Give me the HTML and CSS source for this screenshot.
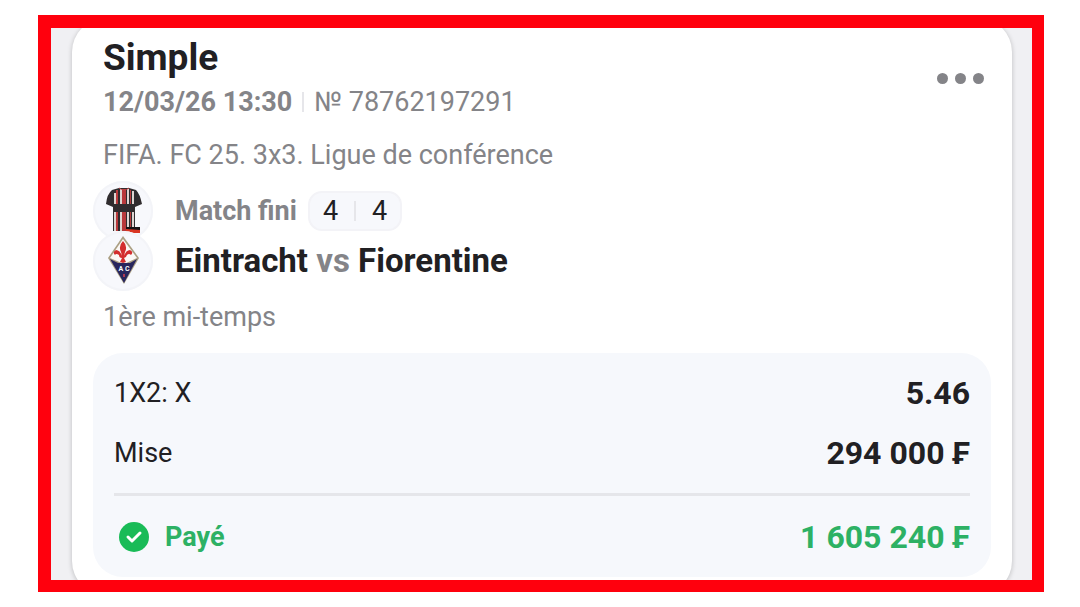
FILE: index.html
```html
<!DOCTYPE html>
<html lang="fr">
<head>
    <meta charset="UTF-8">
    <meta name="viewport" content="width=device-width, initial-scale=1.0">
    <title>Simple</title>
    <link rel="stylesheet" href="styles.css">
</head>
<body>

<main class="frame">
    <article class="card">
        <header class="card-header">
            <div class="heading">
                <h1>Simple</h1>
                <p class="meta">
                    <time datetime="2026-03-12T13:30">12/03/26 13:30</time>
                    <span class="separator"></span>
                    <span>№ 78762197291</span>
                </p>
            </div>
            <button type="button" class="menu-button" aria-label="Menu">
                <span class="dot"></span>
                <span class="dot"></span>
                <span class="dot"></span>
            </button>
        </header>

        <p class="league">FIFA. FC 25. 3x3. Ligue de conférence</p>

        <section class="match">
            <div class="logos">
                <div class="logo">
                    <svg viewBox="0 0 60 60" aria-hidden="true">
                        <path fill="#302c2e" d="M19 9 L26 7 H36 L43 9 Q47 13 49 23 L42 26 V50 H20 V26 L13 23 Q14 13 19 9 Z"/>
                        <path fill="#ddd5d1" d="M21 12h2v38h-2zM27 8h2v42h-2zM34 8h2v42h-2zM39 10h2v40h-2z"/>
                        <path fill="#b8393b" d="M23 9h2v41h-2zM29 8h4v42h-4zM37 9h1v41h-1z"/>
                        <path fill="none" stroke="#bd4143" stroke-width="1" d="M26 7q5 4 10 0"/>
                        <path fill="#302c2e" d="M21 23h20v8H21z"/>
                        <path fill="#171315" d="M33 46h14v4H33z"/>
                        <path fill="#d93623" d="M33 48l14 1v3H33z"/>
                    </svg>
                </div>
                <div class="logo">
                    <svg viewBox="0 0 60 60" aria-hidden="true">
                        <path fill="#ab9f83" d="M30 5 46 27 31 53 15 27Z"/>
                        <path fill="#fbf8f6" d="M30 8 44 27 31 33 17 27Z"/>
                        <path fill="#28265d" d="M17 28 25 32h12l7-4-13 24Z"/>
                        <path fill="#d32e2e" d="M30 10q5 5 2 11l-1 4q2-6 6-6 4 2 1 5-2-2-4 0-1 3-3 3l2 4-3 1-3-1 2-4q-3 0-3-3-3-2-4 0-3-3 1-5 4 0 6 6l-1-4q-3-6 2-11Z"/>
                        <text class="crest-text" x="31" y="40">A C</text>
                        <path fill="#ad3854" d="M30 43h2v3h-2z"/>
                    </svg>
                </div>
            </div>
            <div class="match-info">
                <div class="status">
                    <span>Match fini</span>
                    <div class="score">
                        <span>4</span>
                        <span class="separator"></span>
                        <span>4</span>
                    </div>
                </div>
                <h2>Eintracht <span class="versus">vs</span> Fiorentine</h2>
            </div>
        </section>

        <p class="period">1ère mi-temps</p>

        <dl class="details">
            <div class="row">
                <dt>1X2: X</dt>
                <dd>5.46</dd>
            </div>
            <div class="row">
                <dt>Mise</dt>
                <dd>294 000 ₣</dd>
            </div>
            <div class="row paid">
                <dt>
                    <svg class="check" viewBox="0 0 30 30" aria-hidden="true">
                        <circle cx="15" cy="15" r="15" fill="#19bb57"/>
                        <path d="M9 15l4 4 8-8" fill="none" stroke="#fff" stroke-width="3" stroke-linecap="round" stroke-linejoin="round"/>
                    </svg>
                    Payé
                </dt>
                <dd>1 605 240 ₣</dd>
            </div>
        </dl>
    </article>
</main>

</body>
</html>
```
FILE: styles.css
```css
* {
    box-sizing: border-box;
}
body {
    margin: 0;
    padding: 15px 36px 15px 38px;
    background-color: white;
    color: #212023;
    font-family: Roboto, "Liberation Sans", sans-serif;
    font-size: 27px;
    line-height: 36px;
}
h1, h2, p, dl, dd {
    margin: 0;
}
.frame {
    border: 13px solid #ff000d;
    border-right-width: 12px;
    border-bottom-width: 12px;
    padding: 0 20px 0 21px;
    background-color: #f0f0f3;
    overflow: hidden;
}
/* the card runs under the top and bottom edges of the frame */
.card {
    margin: -10px 0 -15px;
    padding: 19px 21px 18px;
    background-color: white;
    border-radius: 34px;
    box-shadow: 0 1px 5px rgba(0, 0, 0, 0.22);
}
.card-header {
    display: flex;
    justify-content: space-between;
    align-items: center;
    padding: 0 3px 0 10px;
}
h1 {
    font-size: 37px;
    line-height: 42px;
    margin-bottom: 5px;
}
.meta {
    display: flex;
    align-items: center;
    gap: 10px;
    color: #848488;
}
.meta time {
    font-weight: bold;
}
.separator {
    width: 2px;
    height: 20px;
    background-color: #e6e6ea;
}
.menu-button {
    display: flex;
    gap: 7px;
    padding: 4px;
    border: none;
    background: none;
    cursor: pointer;
}
.dot {
    width: 11px;
    height: 11px;
    border-radius: 50%;
    background-color: #848488;
}
.league {
    margin: 17px 10px 8px;
    color: #848488;
}
.match {
    display: flex;
    align-items: center;
    gap: 22px;
}
.logos {
    width: 60px;
}
.logo {
    width: 60px;
    height: 60px;
    border-radius: 50%;
    background-color: #f7f8fc;
    box-shadow: inset 0 0 0 2px #f3f4f8;
}
.logo + .logo {
    position: relative;
    margin-top: -10px;
}
.logo svg {
    display: block;
}
.crest-text {
    fill: white;
    font-size: 7px;
    font-weight: bold;
    text-anchor: middle;
}
.match-info {
    display: flex;
    flex-direction: column;
    gap: 10px;
    line-height: 40px;
}
.status {
    display: flex;
    gap: 11px;
    color: #848488;
    font-weight: bold;
}
.score {
    display: flex;
    align-items: center;
    gap: 16px;
    height: 40px;
    padding: 0 13px;
    border: 2px solid #f3f3f7;
    border-radius: 14px;
    background-color: #f7f8fc;
    color: #212023;
    font-weight: normal;
}
h2 {
    font-size: 33px;
    line-height: 40px;
}
.versus {
    color: #848488;
}
.period {
    margin: 8px 10px 18px;
    color: #848488;
}
.details {
    display: flex;
    flex-direction: column;
    gap: 20px;
    padding: 20px 21px;
    border-radius: 30px;
    background-color: #f6f8fc;
    line-height: 40px;
}
.row {
    display: flex;
    justify-content: space-between;
    align-items: center;
}
.row dd {
    font-size: 32px;
    font-weight: bold;
}
.paid {
    padding-top: 21px;
    border-top: 3px solid #e5e6ea;
    color: #2db164;
}
.paid dt {
    display: flex;
    align-items: center;
    gap: 16px;
    padding-left: 5px;
    font-weight: bold;
}
.check {
    width: 30px;
    height: 30px;
}
```
